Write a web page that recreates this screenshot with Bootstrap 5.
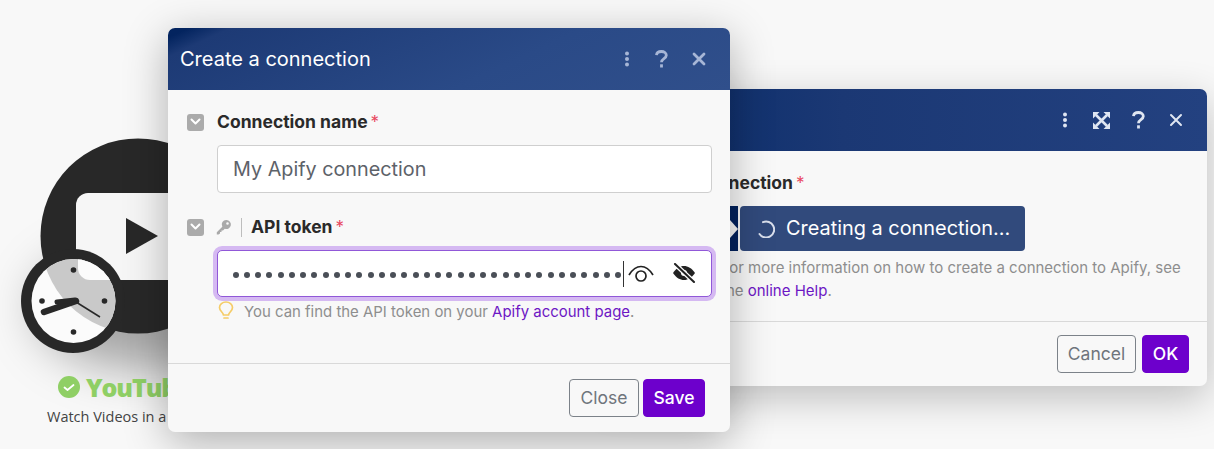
<!DOCTYPE html>
<html lang="en">
<head>
<meta charset="utf-8">
<title>Create a connection</title>
<link href="https://cdn.jsdelivr.net/npm/bootstrap@5.3.0/dist/css/bootstrap.min.css" rel="stylesheet">
<style>
html,body{height:100%;margin:0}
body{background:#f8f8f8;font-family:Inter,"Liberation Sans",sans-serif;color:#2a2a2a;overflow:hidden}
.stage{position:relative;width:1214px;height:449px;overflow:hidden}
.app-node{position:absolute;left:0;top:120px;width:260px;height:329px}
.node-art{position:absolute;left:18px;top:16px}
.node-glow{position:absolute;left:36px;top:125px;width:230px;height:125px;border-radius:50%;background:rgba(0,0,0,.34);filter:blur(24px)}
.node-title{position:absolute;left:58px;top:252px;display:flex;align-items:center;gap:6px;font-family:"Open Sans","Liberation Sans",sans-serif;font-weight:800;font-size:25px;line-height:30px;letter-spacing:-1.1px;color:#8fcf65;white-space:nowrap}
.node-sub{position:absolute;left:47px;top:287px;font-family:"Open Sans","Liberation Sans",sans-serif;font-size:14.5px;line-height:20px;color:#444;white-space:nowrap}
.win{position:absolute;background:#f8f8f8;border-radius:7px;display:flex;flex-direction:column;box-shadow:0 12px 40px rgba(0,0,0,.24)}
.win-back{left:600px;top:89px;width:607px;height:297px}
.win-front{left:168px;top:28px;width:562px;height:404px;box-shadow:0 10px 44px rgba(0,0,0,.3)}
.win-head{height:62px;flex:none;border-radius:7px 7px 0 0;display:flex;align-items:center;color:#fff;font-size:20px;padding:0 12px;background:linear-gradient(155deg,#03245f 0,#03245f 3%,#1d3a75 9%,#2a4a87 60%,#304f8b 100%)}
.win-back .win-head{background:linear-gradient(90deg,#062a68 0,#1b3874 40%,#234180 100%)}
.head-icons{margin-left:auto;display:flex;align-items:center;color:#a7b6d6}
.win-back .head-icons{color:#dfe6f2;margin-right:1px}
.head-btn{width:37px;height:30px;display:flex;align-items:center;justify-content:center}
.win-front .head-btn:first-child{width:32px}
.win-front .head-icons{margin-right:1px}
.win-body{flex:1;position:relative}
.win-foot{flex:none;display:flex;justify-content:flex-end;gap:4px;border-top:1px solid #d9d9d9}
.win-front .win-foot{height:69px;padding:15px 25px 0 0}
.win-back .win-foot{height:65px;padding:13px 18px 0 0;gap:6px}
.act{height:38px;padding:0;font-size:17.5px;line-height:36px;border-radius:4px;border:1px solid #7c8289;color:#6f757c;background:transparent;text-align:center}
.act-primary{background:#6d00cc;border-color:#6d00cc;color:#fff;font-weight:500}
.w-close{width:70px}.w-save{width:62px}.w-cancel{width:79px}.w-ok{width:47px}
.fld-row{display:flex;align-items:center;font-weight:700;font-size:17.5px;line-height:24px;white-space:nowrap}
.toggle{width:17px;height:17px;border-radius:3px;background:#ababab;display:flex;align-items:center;justify-content:center;flex:none}
.req{color:#e8485f;font-weight:400;margin-left:3px;font-size:17px}
.name-row{margin:20px 0 0 19px;gap:13px}
.token-row{margin:0 0 0 19px;gap:12px}
.txt-input{display:block;margin:11px 18px 0 49px;height:48px;width:495px;background:#fff;border:1px solid #cfcfcf;border-radius:4px;padding:0 15px;font-size:19.8px;line-height:46px;color:#5d6269}
.name-block{height:105px}
.key-wrap{display:flex;align-items:center;gap:9px}
.key-sep{width:1px;height:19px;background:#bdbdbd}
.token-box{margin:11px 0 0 49px;width:495px;height:47px;background:#fff;border:1.5px solid #9158d8;border-radius:5px;box-shadow:0 0 0 4px #d5b9f2;display:flex;align-items:center;padding-left:14.500px}
.dots{display:flex;gap:5.25px;padding-top:3px}
.dots i{display:block;width:6px;height:6px;border-radius:50%;background:#4a4f57}
.caret-line{width:1px;height:26px;background:#333;margin-left:1.500px;flex:none}
.eye-on{margin-left:4px;margin-top:1px}
.eye-off{margin-left:18px;margin-top:-2px}
.hint{display:flex;align-items:flex-start;margin:4px 0 0 50px;font-size:14.95px;line-height:22px;color:#8e8e8e;gap:10px}
.hint a,.back-help a{color:#6d16c4;text-decoration:none}
.back-label{position:absolute;left:94px;top:20px;font-weight:700;font-size:17.5px;line-height:24px;white-space:nowrap}
.conn-btn{position:absolute;left:140px;top:55px;height:45px;width:285px;border-radius:4px;background:#314a7c;color:#fff;font-size:19.9px;display:flex;align-items:center;gap:11px;padding:1px 0 0 17px;white-space:nowrap}
.conn-tab{position:absolute;left:110px;top:55px;height:45px;width:28px;background:#02215c}
.conn-tab::after{content:"";position:absolute;right:0;top:14px;border:9px solid transparent;border-right:0;border-left:8px solid #f8f8f8}
.back-help{position:absolute;left:121px;top:105px;width:480px;font-size:15px;line-height:23px;color:#8e8e8e}
</style>
</head>
<body>
<div class="stage">
  <div class="app-node">
    <div class="node-glow"></div>
    <svg class="node-art" width="200" height="220" viewBox="18 16 200 220">
      <circle cx="138" cy="116" r="97.500" fill="#282828"/>
      <rect x="76" y="73" width="140" height="87" rx="12" fill="#f6f6f6"/>
      <polygon points="126,98 158,116 126,134" fill="#282828"/>
      <circle cx="73" cy="181" r="52" fill="#282828"/>
      <circle cx="73.500" cy="181" r="42" fill="#fbfbfb"/>
      <clipPath id="cf"><circle cx="73.500" cy="181" r="42"/></clipPath>
      <g clip-path="url(#cf)">
        <circle cx="138" cy="116" r="97.500" fill="#c9c9c9"/>
        <rect x="78" y="73" width="140" height="87" rx="12" fill="#fbfbfb"/>
      </g>
      <circle cx="73.500" cy="150" r="2.800" fill="#282828"/><circle cx="73.500" cy="212" r="2.800" fill="#282828"/>
      <circle cx="42" cy="181" r="2.800" fill="#282828"/><circle cx="104.500" cy="181" r="2.800" fill="#282828"/>
      <path d="M76 182l24 15" stroke="#282828" stroke-width="1.500" fill="none"/>
      <path d="M44 192l32-11" stroke="#282828" stroke-width="6.500" stroke-linecap="round" fill="none"/>
      <path d="M57 182l18-2" stroke="#282828" stroke-width="5" stroke-linecap="round" fill="none"/>
    </svg>
    <div class="node-title">
      <svg width="22" height="22" viewBox="0 0 22 22"><circle cx="11" cy="11" r="11" fill="#8fcf65"/><path d="M6.500 11.500l3 2.500 6-5" fill="none" stroke="#fff" stroke-width="1.800" stroke-linecap="round" stroke-linejoin="round"/></svg>
      <span>YouTube</span>
    </div>
    <div class="node-sub">Watch Videos in a playlist</div>
  </div>

  <section class="win win-back">
    <div class="win-head">
      <div class="head-icons">
        <div class="head-btn"><svg width="6" height="16" viewBox="0 0 6 16" fill="currentColor"><circle cx="3" cy="2.500" r="2"/><circle cx="3" cy="8" r="2"/><circle cx="3" cy="13.500" r="2"/></svg></div>
        <div class="head-btn"><svg width="17" height="17" viewBox="0 0 17 17" fill="currentColor"><path d="M0 0h6.500L0 6.500zM17 0v6.500L10.500 0zM0 17v-6.500L6.500 17zM17 17h-6.500l6.500-6.500z"/><path d="M3 3l11 11M14 3L3 14" stroke="currentColor" stroke-width="2.600"/></svg></div>
        <div class="head-btn"><svg width="13" height="18" viewBox="0 0 13 18" fill="none" stroke="currentColor" stroke-width="2.800"><path d="M1.500 5.200C1.700 2.900 3.700 1.500 6.400 1.500c2.800 0 4.900 1.500 4.900 3.800 0 3.500-4.800 3.200-4.800 7"/><path d="M6.500 14.300v3.200"/></svg></div>
        <div class="head-btn"><svg width="14" height="14" viewBox="0 0 14 14" stroke="currentColor" stroke-width="2" stroke-linecap="round"><path d="M2 2l10 10M12 2L2 12"/></svg></div>
      </div>
    </div>
    <div class="win-body">
      <div class="back-label">Connection<span class="req">*</span></div>
      <div class="conn-tab"></div>
      <div class="conn-btn">
        <svg width="18" height="18" viewBox="0 0 18 18" fill="none" stroke="#d9dfec" stroke-width="2" stroke-linecap="round"><path d="M6 2.200A8 8 0 1 1 2.500 14"/></svg>
        <span>Creating a connection...</span>
      </div>
      <div class="back-help">For more information on how to create a connection to Apify, see<br>the <a href="#">online Help</a>.</div>
    </div>
    <div class="win-foot">
      <button type="button" class="act w-cancel">Cancel</button>
      <button type="button" class="act act-primary w-ok">OK</button>
    </div>
  </section>

  <section class="win win-front">
    <div class="win-head">
      <span>Create a connection</span>
      <div class="head-icons">
        <div class="head-btn"><svg width="6" height="16" viewBox="0 0 6 16" fill="currentColor"><circle cx="3" cy="2.500" r="2"/><circle cx="3" cy="8" r="2"/><circle cx="3" cy="13.500" r="2"/></svg></div>
        <div class="head-btn"><svg width="13" height="18" viewBox="0 0 13 18" fill="none" stroke="currentColor" stroke-width="2.800"><path d="M1.500 5.200C1.700 2.900 3.700 1.500 6.400 1.500c2.800 0 4.900 1.500 4.900 3.800 0 3.500-4.800 3.200-4.800 7"/><path d="M6.500 14.300v3.200"/></svg></div>
        <div class="head-btn"><svg width="14" height="14" viewBox="0 0 14 14" stroke="currentColor" stroke-width="2.800" stroke-linecap="round"><path d="M2 2l10 10M12 2L2 12"/></svg></div>
      </div>
    </div>
    <div class="win-body">
      <div class="name-block">
        <div class="fld-row name-row">
          <span class="toggle"><svg width="11" height="8" viewBox="0 0 11 8" fill="none" stroke="#fff" stroke-width="2" stroke-linecap="round" stroke-linejoin="round"><path d="M1.500 1.500l4 4 4-4"/></svg></span>
          <span>Connection name<span class="req">*</span></span>
        </div>
        <input class="txt-input" type="text" value="My Apify connection" aria-label="Connection name">
      </div>
      <div class="fld-row token-row">
        <span class="toggle"><svg width="11" height="8" viewBox="0 0 11 8" fill="none" stroke="#fff" stroke-width="2" stroke-linecap="round" stroke-linejoin="round"><path d="M1.500 1.500l4 4 4-4"/></svg></span>
        <span class="key-wrap">
          <svg width="16" height="16" viewBox="0 0 16 16" fill="#a9a9a9"><path d="M10.500 1a4.500 4.500 0 1 1-1.700 8.700L7 11.500H5.500V13H4v1.500L2.500 15.500H.8v-2.300l5.500-5.500A4.500 4.500 0 0 1 10.500 1zm1 2.200a1.300 1.300 0 1 0 0 2.600 1.300 1.300 0 0 0 0-2.600z"/></svg>
          <span class="key-sep"></span>
          <span>API token<span class="req">*</span></span>
        </span>
      </div>
      <div class="token-box">
        <div class="dots"><i></i><i></i><i></i><i></i><i></i><i></i><i></i><i></i><i></i><i></i><i></i><i></i><i></i><i></i><i></i><i></i><i></i><i></i><i></i><i></i><i></i><i></i><i></i><i></i><i></i><i></i><i></i><i></i><i></i><i></i><i></i><i></i><i></i><i></i><i></i></div>
        <span class="caret-line"></span>
        <svg class="eye-on" width="26" height="18" viewBox="0 0 26 18" fill="none" stroke="#222" stroke-width="1.700"><path d="M1 10C5 3.500 9 1.500 13 1.500S21 3.500 25 10"/><circle cx="13" cy="11" r="5"/></svg>
        <svg class="eye-off" width="24" height="20" viewBox="0 0 24 20"><path d="M1 10C4.500 5 8 3 12 3s7.500 2 11 7c-3.500 5-7 7-11 7s-7.500-2-11-7z" fill="#222"/><circle cx="12" cy="10" r="3" fill="#fff"/><path d="M3 1l19 18" stroke="#fff" stroke-width="4.500"/><path d="M3 1l19 18" stroke="#222" stroke-width="2" stroke-linecap="round"/></svg>
      </div>
      <div class="hint">
        <svg width="16" height="20" viewBox="0 0 16 20" fill="none" stroke="#f5cc67" stroke-width="1.700" stroke-linecap="round"><path d="M5.500 14C5 11 1.500 10 1.500 6.500a6.500 5.500 0 0 1 13 0C14.500 10 11 11 10.500 14z"/><path d="M6 17h4"/></svg>
        <span>You can find the API token on your <a href="#">Apify account page</a>.</span>
      </div>
    </div>
    <div class="win-foot">
      <button type="button" class="act w-close">Close</button>
      <button type="button" class="act act-primary w-save">Save</button>
    </div>
  </section>
</div>
<script src="https://cdn.jsdelivr.net/npm/bootstrap@5.3.0/dist/js/bootstrap.bundle.min.js"></script>
</body>
</html>
